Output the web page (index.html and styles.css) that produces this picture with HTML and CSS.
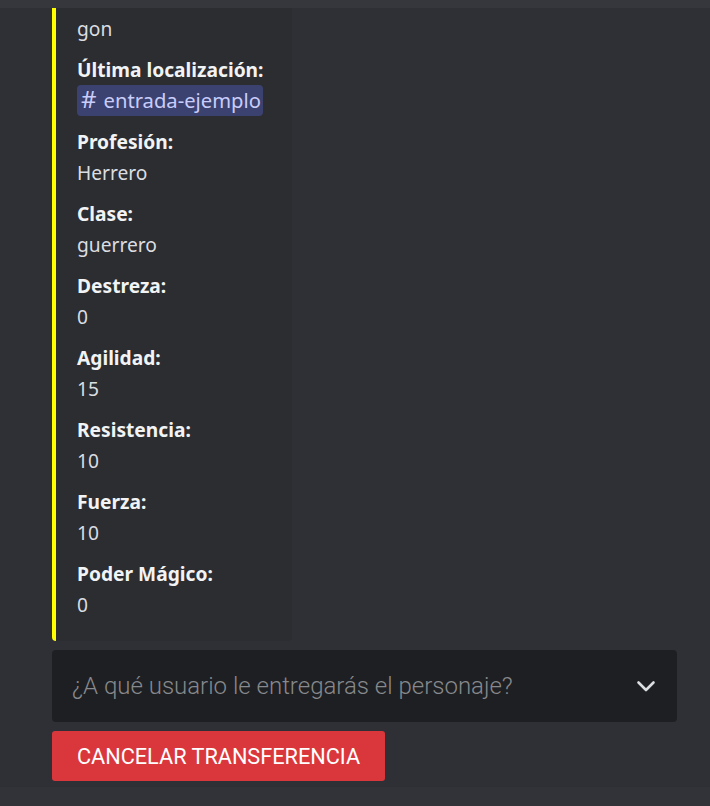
FILE: index.html
```html
<!DOCTYPE html>
<html lang="es">
<head>
<meta charset="utf-8">
<link rel="stylesheet" href="styles.css">
</head>
<body>
<div class="topbar"></div>
<div class="message">
  <div class="embed">
    <div class="field"><div class="value">gon</div></div>
    <div class="field">
      <div class="name">Última localización:</div>
      <div class="value"><span class="mention"><span class="hash">#</span>entrada-ejemplo</span></div>
    </div>
    <div class="field"><div class="name">Profesión:</div><div class="value">Herrero</div></div>
    <div class="field"><div class="name">Clase:</div><div class="value">guerrero</div></div>
    <div class="field"><div class="name">Destreza:</div><div class="value">0</div></div>
    <div class="field"><div class="name">Agilidad:</div><div class="value">15</div></div>
    <div class="field"><div class="name">Resistencia:</div><div class="value">10</div></div>
    <div class="field"><div class="name">Fuerza:</div><div class="value">10</div></div>
    <div class="field"><div class="name">Poder Mágico:</div><div class="value">0</div></div>
  </div>
  <div class="select">
    <span class="placeholder">¿A qué usuario le entregarás el personaje?</span>
    <svg class="chevron" width="24" height="24" viewBox="0 0 24 24"><path d="M4.5 8.5 L12 16 L19.5 8.5" fill="none" stroke="#dbdee1" stroke-width="2.6" stroke-linecap="round" stroke-linejoin="round"/></svg>
  </div>
  <div class="actions">
    <button class="danger">CANCELAR TRANSFERENCIA</button>
  </div>
</div>
<div class="footer"></div>
</body>
</html>
```
FILE: styles.css
```css
html, body {
  margin: 0;
  padding: 0;
}
body {
  background: #2e3035;
  width: 710px;
  height: 806px;
  overflow: hidden;
  font-family: "Noto Sans", "Open Sans", sans-serif;
}
.topbar {
  height: 8px;
  background: #35373c;
}
.message {
  padding: 0 33px 6px 52px;
}
.embed {
  background: #2b2d31;
  border-left: 4px solid #ffff00;
  border-radius: 0 0 4px 4px;
  box-sizing: border-box;
  width: 240px;
  padding: 7px 16px 22px 21px;
  display: flex;
  flex-direction: column;
  gap: 13px;
}
.field {
  display: flex;
  flex-direction: column;
}
.name {
  color: #f2f3f5;
  font-weight: 700;
  font-size: 19.2px;
  line-height: 28px;
  margin-bottom: 3px;
  white-space: nowrap;
}
.value {
  color: #dbdee1;
  font-size: 19.2px;
  line-height: 28px;
  height: 28px;
  white-space: nowrap;
}
.mention {
  background: #3c4270;
  color: #c9cdfb;
  border-radius: 4px;
  padding: 1px 2px 2px 4px;
  font-size: 20.2px;
  line-height: 0;
}
.hash {
  font-size: 24px;
  line-height: 0;
  margin-right: 7px;
  font-weight: 400;
}
.select {
  margin-top: 9px;
  height: 72px;
  background: #1e1f22;
  border-radius: 4px;
  display: flex;
  align-items: center;
  justify-content: space-between;
  padding: 0 19px 0 20px;
}
.placeholder {
  color: #87898c;
  font-family: Roboto, "Noto Sans", sans-serif;
  font-weight: 300;
  font-size: 24px;
}
.chevron {
  display: block;
}
.actions {
  margin-top: 9px;
  display: flex;
}
.danger {
  background: #da373c;
  color: #ffffff;
  border: none;
  border-radius: 3px;
  height: 50px;
  width: 333px;
  font-family: Roboto, "Noto Sans", sans-serif;
  font-size: 21.7px;
  font-weight: 400;
  padding: 0;
}
.footer {
  height: 20px;
  background: #313338;
}
```
